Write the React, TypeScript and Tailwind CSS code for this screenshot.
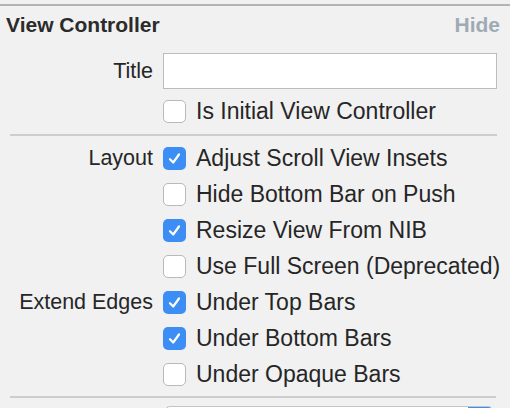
import React from "react";

function Check({ checked }: { checked: boolean }) {
  if (checked) {
    return (
      <div className="w-[23px] h-[23px] rounded-[5px] bg-[#3d8ef4] flex items-center justify-center shrink-0">
        <svg width="15" height="15" viewBox="0 0 15 15" fill="none">
          <path d="M3 8.2 L6.2 11.5 L12 3.5" stroke="white" strokeWidth="2.2" strokeLinecap="round" strokeLinejoin="round" />
        </svg>
      </div>
    );
  }
  return <div className="w-[23px] h-[23px] rounded-[5px] bg-white border border-[#b9b9b9] shrink-0" />;
}

const rows: { label?: string; text: string; checked: boolean }[] = [
  { label: "Layout", text: "Adjust Scroll View Insets", checked: true },
  { text: "Hide Bottom Bar on Push", checked: false },
  { text: "Resize View From NIB", checked: true },
  { text: "Use Full Screen (Deprecated)", checked: false },
  { label: "Extend Edges", text: "Under Top Bars", checked: true },
  { text: "Under Bottom Bars", checked: true },
  { text: "Under Opaque Bars", checked: false },
];

export default function App() {
  return (
    <div
      className="w-[510px] h-[408px] bg-[#f1f1f1] overflow-hidden text-[#262626]"
      style={{ fontFamily: '"Liberation Sans", Arial, sans-serif' }}
    >
      <div className="h-[4px]" />
      <div className="h-[2px] bg-[#b4b4b4]" />
      <div className="h-[38px] flex items-center justify-between pl-[6px] pr-[10px]">
        <span className="text-[21px] font-bold text-[#2b2b2b]">View Controller</span>
        <span className="text-[21px] font-bold text-[#9faab5]">Hide</span>
      </div>
      <div className="grid grid-cols-[153px_1fr] gap-x-[10px] pr-[13px] mt-[9px]">
        <div className="flex items-center justify-end text-[21.5px]">Title</div>
        <div className="h-[36px] bg-white border border-[#bcbcbc]" />
      </div>
      <div className="grid grid-cols-[153px_1fr] gap-x-[10px] pr-[13px] mt-[11px]">
        <div />
        <div className="flex items-center gap-[10px] h-[23px]">
          <Check checked={false} />
          <span className="text-[23px]">Is Initial View Controller</span>
        </div>
      </div>
      <div className="mt-[11px] ml-[10px] mr-[13px] h-[2px] bg-[#cdcdcd]" />
      <div className="grid grid-cols-[153px_1fr] gap-x-[10px] pr-[13px] mt-[4px]">
        {rows.map((r, i) => (
          <React.Fragment key={i}>
            <div className="h-[36px] flex items-center justify-end text-[21.5px]">{r.label ?? ""}</div>
            <div className="h-[36px] flex items-center gap-[10px]">
              <Check checked={r.checked} />
              <span className="text-[23px] whitespace-nowrap">{r.text}</span>
            </div>
          </React.Fragment>
        ))}
      </div>
      <div className="mt-[4px] ml-[10px] mr-[14px] h-[2px] bg-[#cdcdcd]" />
      <div className="mt-[8px] ml-[166px] mr-[18px] h-[24px] border-t border-l border-[#c4c4c4] bg-white rounded-t-[4px] flex justify-end overflow-hidden">
        <div className="w-[24px] h-full bg-[#3d8ef4]" />
      </div>
    </div>
  );
}
